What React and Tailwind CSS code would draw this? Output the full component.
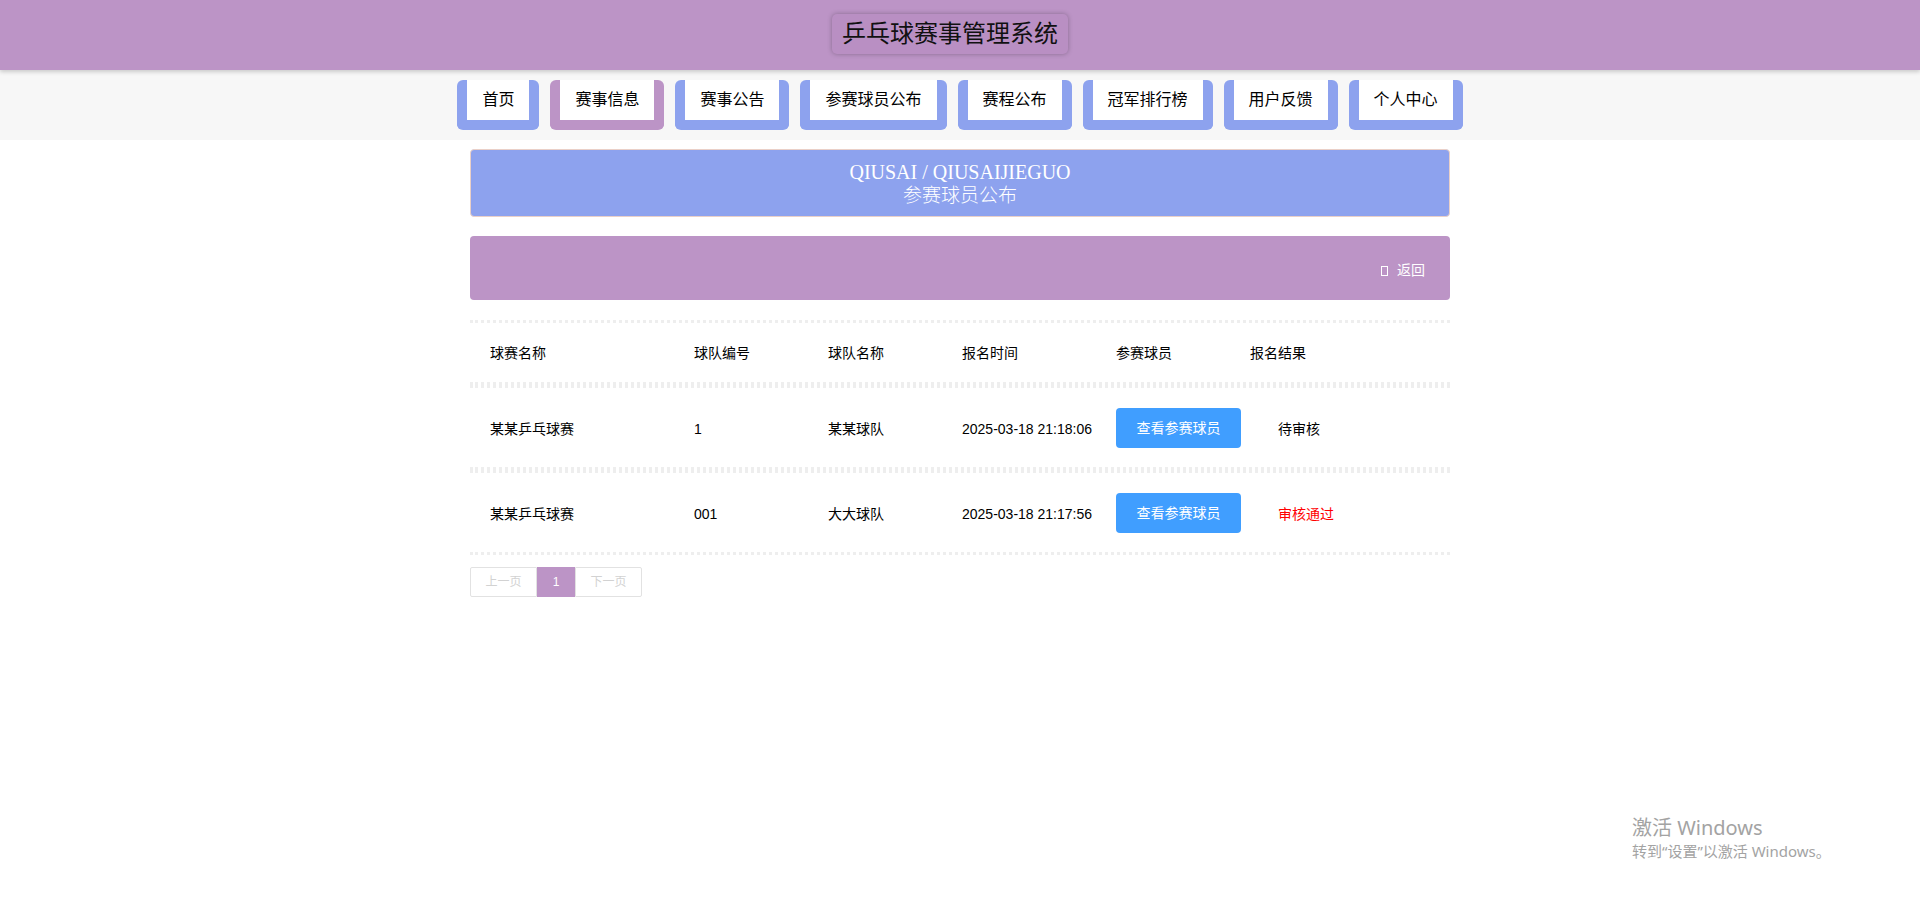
export default function App() {
  const tabs = [
    ['首页', false],
    ['赛事信息', true],
    ['赛事公告', false],
    ['参赛球员公布', false],
    ['赛程公布', false],
    ['冠军排行榜', false],
    ['用户反馈', false],
    ['个人中心', false],
  ];
  const rows = [
    ['某某乒乓球赛', '1', '某某球队', '2025-03-18 21:18:06', '待审核', false],
    ['某某乒乓球赛', '001', '大大球队', '2025-03-18 21:17:56', '审核通过', true],
  ];
  const grid = 'grid grid-cols-[204px_134px_134px_154px_134px_1fr] items-center';
  return (
    <div className="relative min-h-[911px] bg-white text-black font-['Liberation_Sans','Noto_Sans_CJK_SC',sans-serif]">
      <header className="relative z-10 flex h-[70px] justify-center bg-[#bc94c6] pr-[20px] pt-[14px] shadow-[0_2px_4px_rgba(0,0,0,0.18)]">
        <div className="h-[40px] rounded-[5px] bg-[#b98fc3] px-[10px] text-[24px] leading-[40px] text-[#111] shadow-[0_0_5px_rgba(0,0,0,0.28)]">
          乒乓球赛事管理系统
        </div>
      </header>

      <nav className="flex h-[70px] justify-center gap-[11px] bg-[#f7f7f7] pt-[10px]">
        {tabs.map(([t, active]) => (
          <div
            key={t}
            className={
              active
                ? 'h-[50px] rounded-[6px] border-x-[10px] border-b-[10px] border-[#bc94c6] bg-white px-[15px] text-[16px] leading-[40px]'
                : 'h-[50px] rounded-[6px] border-x-[10px] border-b-[10px] border-[#8da2ee] bg-white px-[15px] text-[16px] leading-[40px]'
            }
          >
            {t}
          </div>
        ))}
      </nav>

      <main className="mx-auto w-[980px]">
        <div className="mt-[9px] flex h-[68px] flex-col items-center justify-center rounded-[4px] border border-[#ead0c8] bg-[#8da2ee] text-[20px] leading-[22px] text-white font-['Liberation_Serif','Noto_Sans_CJK_SC',serif]">
          <div>QIUSAI / QIUSAIJIEGUO</div>
          <div className="font-['Noto_Sans_CJK_SC',sans-serif] font-light text-[19px]">参赛球员公布</div>
        </div>

        <div className="mt-[19px] flex h-[64px] items-center justify-end rounded-[4px] bg-[#bc94c6] pr-[25px] pt-[5px] text-[14px] text-white">
          <span className="mr-[9px] inline-block h-[10px] w-[7px] border border-white"></span>
          <span>返回</span>
        </div>

        <div className="mt-[20px] text-[14px]">
          <div className={grid + ' h-[65px] border-y-[3px] border-dotted border-[#eeeeee]'}>
            <div className="pl-[20px] pt-[2px]">球赛名称</div>
            <div className="pl-[20px] pt-[2px]">球队编号</div>
            <div className="pl-[20px] pt-[2px]">球队名称</div>
            <div className="pl-[20px] pt-[2px]">报名时间</div>
            <div className="pl-[20px] pt-[2px]">参赛球员</div>
            <div className="pl-[20px] pt-[2px]">报名结果</div>
          </div>
          {rows.map((r, i) => (
            <div key={i} className={grid + ' h-[85px] border-y-[3px] border-dotted border-[#eeeeee]'}>
              <div className="pl-[20px] pt-[3px]">{r[0]}</div>
              <div className="pl-[20px] pt-[3px]">{r[1]}</div>
              <div className="pl-[20px] pt-[3px]">{r[2]}</div>
              <div className="pl-[20px] pt-[3px] whitespace-nowrap">{r[3]}</div>
              <div className="pl-[20px] pt-[1px]">
                <button className="h-[40px] w-[125px] whitespace-nowrap rounded-[4px] bg-[#409eff] text-[14px] text-white">
                  查看参赛球员
                </button>
              </div>
              <div className={r[5] ? 'pl-[48px] pt-[3px] text-[#ff0000]' : 'pl-[48px] pt-[3px]'}>{r[4]}</div>
            </div>
          ))}
        </div>

        <div className="mt-[12px] flex h-[30px] text-[12px]">
          <div className="flex w-[67px] items-center justify-center rounded-l-[2px] border border-[#e2e2e2] text-[#d2d2d2]">上一页</div>
          <div className="flex w-[38px] items-center justify-center bg-[#bc94c6] text-white">1</div>
          <div className="flex w-[67px] items-center justify-center rounded-r-[2px] border border-[#e2e2e2] text-[#d2d2d2]">下一页</div>
        </div>
      </main>

      <div className="absolute left-[1632px] top-[815px] text-[#a3a3a3] font-['Noto_Sans','Noto_Sans_CJK_SC',sans-serif]">
        <div className="text-[20px] leading-[26px]">激活 Windows</div>
        <div className="text-[15px] leading-[20px]">转到“设置”以激活 Windows。</div>
      </div>
    </div>
  );
}
